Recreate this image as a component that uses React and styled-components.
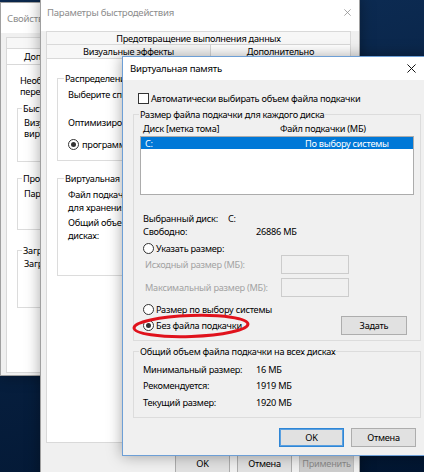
import React from "react";
import styled, { createGlobalStyle } from "styled-components";

const GlobalStyle = createGlobalStyle`
  html, body {
    margin: 0;
    padding: 0;
  }
  body {
    font-family: "Noto Sans", "DejaVu Sans", sans-serif;
    font-size: 9.2px;
    letter-spacing: -0.25px;
    color: #000;
  }
`;

const Desktop = styled.div`
  position: relative;
  width: 424px;
  height: 472px;
  overflow: hidden;
  background: linear-gradient(165deg, #0d2f5a 0%, #0a2548 35%, #021631 100%);
`;

const Window = styled.div`
  position: absolute;
  left: ${p => p.$x}px;
  top: ${p => p.$y}px;
  width: ${p => p.$w}px;
  height: ${p => p.$h}px;
  box-sizing: border-box;
  border: 1px solid ${p => (p.$active ? "#6d9fd6" : "#a0a0a0")};
  background: #f0f0f0;
  box-shadow: 0 0 14px rgba(0, 0, 0, 0.35);
  display: flex;
  flex-direction: column;
  overflow: hidden;
  white-space: nowrap;
`;

const TitleBar = styled.div`
  flex: none;
  box-sizing: border-box;
  height: ${p => p.$h}px;
  padding: 0 ${p => p.$pr}px ${p => p.$pb || 0}px ${p => p.$pl}px;
  background: #fff;
  display: flex;
  align-items: center;
  justify-content: space-between;
  color: ${p => (p.$active ? "#000" : "#8c8c8c")};
  font-size: 9.6px;
`;

const Body = styled.div`
  flex: 1;
  display: flex;
  flex-direction: column;
  padding: 0 ${p => p.$pr}px 0 ${p => p.$pl}px;
`;

const TabRow = styled.div`
  flex: none;
  display: flex;
  height: ${p => p.$h}px;
`;

const Tab = styled.div`
  flex: none;
  box-sizing: border-box;
  width: ${p => p.$w}px;
  height: 100%;
  display: flex;
  align-items: center;
  justify-content: ${p => (p.$left ? "flex-start" : "center")};
  padding-left: ${p => p.$pl || 0}px;
  border: 1px solid #d9d9d9;
  border-bottom: none;
  margin-left: -1px;
  &:first-child {
    margin-left: 0;
  }
  background: ${p => (p.$selected ? "#fff" : "#f7f7f7")};
`;

const Panel = styled.div`
  flex: none;
  box-sizing: border-box;
  height: ${p => p.$h}px;
  background: #fff;
  border: 1px solid #d9d9d9;
  display: flex;
  flex-direction: column;
  padding-left: ${p => p.$pl}px;
`;

const Group = styled.div`
  position: relative;
  flex: none;
  box-sizing: border-box;
  height: ${p => (p.$h ? `${p.$h}px` : "auto")};
  width: ${p => (p.$w ? `${p.$w}px` : "auto")};
  margin-top: ${p => p.$mt}px;
  padding: ${p => p.$pt || 0}px 0 ${p => p.$pbot || 0}px ${p => p.$pl || 0}px;
  border: 1px solid #dcdcdc;
  display: flex;
  flex-direction: column;
`;

const GroupTitle = styled.span`
  position: absolute;
  top: -7px;
  left: ${p => p.$left}px;
  line-height: 13px;
  padding: 0 1px;
  background: ${p => p.$bg};
`;

const Line = styled.div`
  flex: none;
  line-height: ${p => p.$lh || 13}px;
  margin-top: ${p => p.$mt || 0}px;
  padding-left: ${p => p.$pl || 0}px;
  color: ${p => (p.$muted ? "#a3a3a3" : "#000")};
`;

const Row = styled.div`
  flex: none;
  display: flex;
  align-items: center;
  height: ${p => p.$h}px;
  margin-top: ${p => p.$mt || 0}px;
  padding-left: ${p => p.$pl || 0}px;
  padding-right: ${p => p.$pr || 0}px;
  gap: ${p => p.$gap || 0}px;
  justify-content: ${p => (p.$spread ? "space-between" : "flex-start")};
`;

const Cell = styled.span`
  flex: none;
  display: flex;
  align-items: center;
  gap: ${p => p.$gap || 0}px;
  width: ${p => (p.$w ? `${p.$w}px` : "auto")};
  color: ${p => (p.$muted ? "#a3a3a3" : "inherit")};
`;

const Radio = styled.span`
  flex: none;
  box-sizing: border-box;
  width: 11px;
  height: 11px;
  border: 1px solid #333;
  border-radius: 50%;
  background: #fff;
  display: inline-flex;
  align-items: center;
  justify-content: center;
  &::after {
    content: "";
    width: 5px;
    height: 5px;
    border-radius: 50%;
    background: ${p => (p.$checked ? "#333" : "transparent")};
  }
`;

const Checkbox = styled.span`
  flex: none;
  box-sizing: border-box;
  width: 11px;
  height: 11px;
  border: 1px solid #333;
  background: #fff;
`;

const ListBox = styled.div`
  flex: none;
  box-sizing: border-box;
  height: 59px;
  margin: 1px 6px 0;
  background: #fff;
  border: 1px solid #acacac;
  display: flex;
  flex-direction: column;
`;

const ListItem = styled.div`
  flex: none;
  display: flex;
  align-items: center;
  height: 12px;
  padding-left: 4px;
  background: ${p => (p.$selected ? "#0078d7" : "transparent")};
  color: ${p => (p.$selected ? "#fff" : "#000")};
`;

const TextBox = styled.span`
  flex: none;
  box-sizing: border-box;
  width: 68px;
  height: 19px;
  background: #f0f0f0;
  border: 1px solid #cccccc;
`;

const ButtonBar = styled.div`
  flex: none;
  display: flex;
  justify-content: flex-end;
  gap: ${p => p.$gap}px;
  margin-top: ${p => p.$mt}px;
  padding-right: ${p => p.$pr || 0}px;
`;

const Button = styled.div`
  flex: none;
  box-sizing: border-box;
  width: ${p => p.$w}px;
  height: ${p => p.$h}px;
  display: flex;
  align-items: center;
  justify-content: center;
  background: ${p => (p.$disabled ? "#cccccc" : "#e1e1e1")};
  border: 1px solid
    ${p => (p.$default ? "#2f86d6" : p.$disabled ? "#bfbfbf" : "#adadad")};
  box-shadow: ${p => (p.$default ? "inset 0 0 0 1px #5aa0e0" : "none")};
  color: ${p => (p.$disabled ? "#8a8a8a" : "#000")};
`;

const Markup = styled.svg`
  position: absolute;
  left: 0;
  top: 0;
  pointer-events: none;
`;

const CloseIcon = ({ size, color }) => (
  <svg width={size} height={size} viewBox="0 0 10 10">
    <path d="M0.5 0.5 L9.5 9.5 M9.5 0.5 L0.5 9.5" stroke={color} strokeWidth="1.1" fill="none" />
  </svg>
);

const SystemProperties = () => (
  <Window $x={0} $y={2} $w={260} $h={374}>
    <TitleBar $h={30} $pl={6} $pr={10}>
      <span>Свойства системы</span>
    </TitleBar>
    <Body $pl={5} $pr={0}>
      <TabRow $h={11} style={{ marginTop: 4 }}>
        <Tab $w={120} $left $pl={42}>Имя компьютера</Tab>
        <Tab $w={110}>Оборудование</Tab>
      </TabRow>
      <TabRow $h={16}>
        <Tab $w={100} $selected $left $pl={17}>Дополнительно</Tab>
        <Tab $w={110}>Защита системы</Tab>
      </TabRow>
      <Panel $h={309} $pl={10}>
        <Line $lh={11} $mt={10} $pl={3}>Необходимо иметь права администратора для изменения</Line>
        <Line $lh={11} $pl={3}>перечисленных параметров.</Line>
        <Group $mt={11} $h={54} $w={230} $pt={8} $pl={6}>
          <GroupTitle $left={4} $bg="#fff">Быстродействие</GroupTitle>
          <Line $lh={11}>Визуальные эффекты, использование процессора, оперативной и</Line>
          <Line $lh={11}>виртуальной памяти</Line>
        </Group>
        <Group $mt={16} $h={52} $w={230} $pt={9} $pl={6}>
          <GroupTitle $left={4} $bg="#fff">Профиль пользователя</GroupTitle>
          <Line $lh={11}>Параметры рабочего стола, относящиеся ко входу в систему</Line>
        </Group>
        <Group $mt={20} $h={58} $w={230} $pt={7} $pl={6}>
          <GroupTitle $left={4} $bg="#fff">Загрузка и восстановление</GroupTitle>
          <Line $lh={11}>Загрузка и восстановление системы, отладочная информация</Line>
        </Group>
      </Panel>
    </Body>
  </Window>
);

const Performance = () => (
  <Window $x={40} $y={-3} $w={320} $h={490}>
    <TitleBar $h={33} $pb={4} $pl={6} $pr={8}>
      <span>Параметры быстродействия</span>
      <CloseIcon size={7} color="#8c8c8c" />
    </TitleBar>
    <Body $pl={5} $pr={5}>
      <TabRow $h={13}>
        <Tab $w={305}>Предотвращение выполнения данных</Tab>
      </TabRow>
      <TabRow $h={14}>
        <Tab $w={165}>Визуальные эффекты</Tab>
        <Tab $w={141} $selected>Дополнительно</Tab>
      </TabRow>
      <Panel $h={385} $pl={10}>
        <Group $mt={19} $h={83} $w={284} $pt={9} $pl={10}>
          <GroupTitle $left={6} $bg="#fff">Распределение времени процессора</GroupTitle>
          <Line>Выберите способ распределения ресурсов процессора:</Line>
          <Line $mt={15}>Оптимизировать работу:</Line>
          <Row $h={13} $mt={9} $gap={24}>
            <Cell $gap={3}>
              <Radio $checked />
              программ
            </Cell>
            <Cell $gap={3}>
              <Radio />
              служб
            </Cell>
          </Row>
        </Group>
        <Group $mt={17} $h={98} $w={284} $pt={9} $pl={10}>
          <GroupTitle $left={6} $bg="#fff">Виртуальная память</GroupTitle>
          <Line>Файл подкачки - область на жестком диске, используемая</Line>
          <Line>для хранения данных, не помещающихся в ОЗУ.</Line>
          <Line $mt={2}>Общий объем файла подкачки на всех</Line>
          <Line>дисках:</Line>
        </Group>
      </Panel>
      <ButtonBar $gap={7} $mt={9}>
        <Button $w={55} $h={22}>OK</Button>
        <Button $w={55} $h={22}>Отмена</Button>
        <Button $w={55} $h={22} $disabled>Применить</Button>
      </ButtonBar>
    </Body>
  </Window>
);

const VirtualMemory = () => (
  <Window $x={122} $y={56} $w={310} $h={400} $active>
    <TitleBar $h={23} $pl={7} $pr={15} $active>
      <span>Виртуальная память</span>
      <CloseIcon size={9} color="#111" />
    </TitleBar>
    <Body $pl={10} $pr={10}>
      <Row $h={13} $mt={12} $pl={5} $gap={2}>
        <Checkbox />
        Автоматически выбирать объем файла подкачки
      </Row>
      <Group $mt={9} $pbot={5}>
        <GroupTitle $left={5} $bg="#f0f0f0">Размер файла подкачки для каждого диска</GroupTitle>
        <Row $h={14} $mt={6} $pl={9}>
          <Cell $w={137}>Диск [метка тома]</Cell>
          <Cell>Файл подкачки (МБ)</Cell>
        </Row>
        <ListBox>
          <ListItem $selected>
            <Cell $w={160}>C:</Cell>
            <Cell>По выбору системы</Cell>
          </ListItem>
        </ListBox>
        <Row $h={13} $mt={17} $pl={9}>
          <Cell $w={85}>Выбранный диск:</Cell>
          <Cell>C:</Cell>
        </Row>
        <Row $h={13} $pl={9}>
          <Cell $w={113}>Свободно:</Cell>
          <Cell>26886 МБ</Cell>
        </Row>
        <Row $h={13} $mt={4} $pl={9} $gap={2}>
          <Radio />
          Указать размер:
        </Row>
        <Row $h={19} $pl={11}>
          <Cell $w={136} $muted>Исходный размер (МБ):</Cell>
          <TextBox />
        </Row>
        <Row $h={19} $mt={4} $pl={11}>
          <Cell $w={136} $muted>Максимальный размер (МБ):</Cell>
          <TextBox />
        </Row>
        <Row $h={13} $mt={6} $pl={9} $gap={2}>
          <Radio />
          Размер по выбору системы
        </Row>
        <Row $h={19} $pl={9} $pr={13} $spread>
          <Cell $gap={2}>
            <Radio $checked />
            Без файла подкачки
          </Cell>
          <Button $w={66} $h={19}>Задать</Button>
        </Row>
      </Group>
      <Group $mt={10} $pt={9} $pbot={6}>
        <GroupTitle $left={5} $bg="#f0f0f0">Общий объем файла подкачки на всех дисках</GroupTitle>
        <Row $h={16.5} $pl={9}>
          <Cell $w={113}>Минимальный размер:</Cell>
          <Cell>16 МБ</Cell>
        </Row>
        <Row $h={16.5} $pl={9}>
          <Cell $w={113}>Рекомендуется:</Cell>
          <Cell>1919 МБ</Cell>
        </Row>
        <Row $h={16.5} $pl={9}>
          <Cell $w={113}>Текущий размер:</Cell>
          <Cell>1920 МБ</Cell>
        </Row>
      </Group>
      <ButtonBar $gap={7} $mt={10} $pr={5}>
        <Button $w={65} $h={19} $default>OK</Button>
        <Button $w={65} $h={19}>Отмена</Button>
      </ButtonBar>
    </Body>
  </Window>
);

export default function App() {
  return (
    <>
      <GlobalStyle />
      <Desktop>
        <SystemProperties />
        <Performance />
        <VirtualMemory />
        <Markup width="424" height="472">
          <ellipse
            cx="191"
            cy="326"
            rx="57"
            ry="10.5"
            transform="rotate(-2 191 326)"
            fill="none"
            stroke="#e0121c"
            strokeWidth="3"
          />
        </Markup>
      </Desktop>
    </>
  );
}
